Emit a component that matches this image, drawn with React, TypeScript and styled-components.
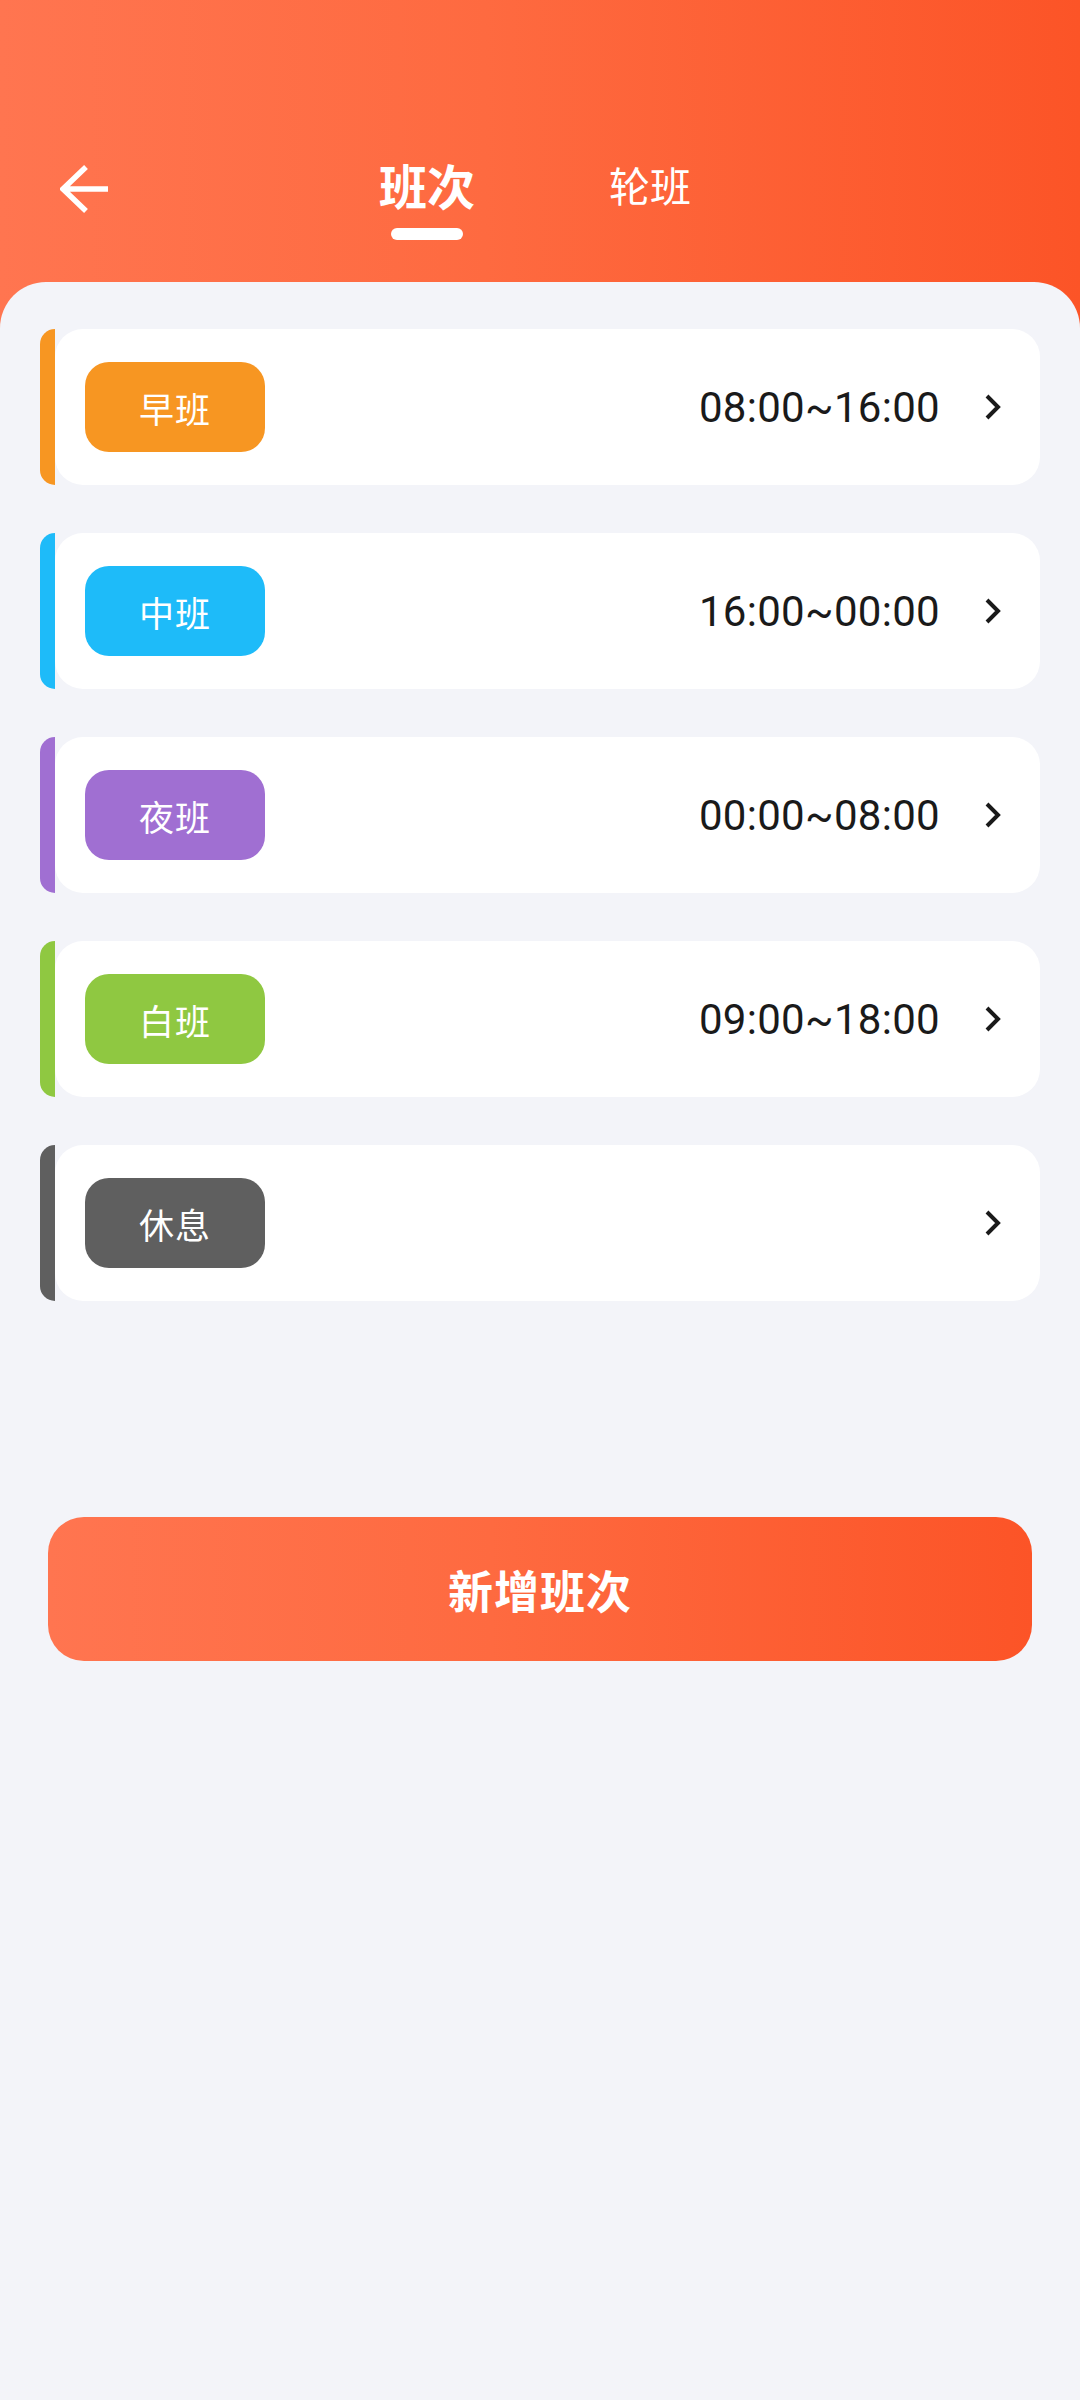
import React from "react";
import styled, { createGlobalStyle } from "styled-components";

const GlobalStyle = createGlobalStyle`
  html, body {
    margin: 0;
    padding: 0;
    background: #f3f4f9;
  }
  body {
    font-family: Roboto, "Noto Sans CJK SC", sans-serif;
    -webkit-font-smoothing: antialiased;
  }
  * {
    box-sizing: border-box;
  }
`;

interface Shift {
  name: string;
  time?: string;
  color: string;
}

const shifts: Shift[] = [
  { name: "早班", time: "08:00~16:00", color: "#f79622" },
  { name: "中班", time: "16:00~00:00", color: "#1ebbf9" },
  { name: "夜班", time: "00:00~08:00", color: "#a06fd2" },
  { name: "白班", time: "09:00~18:00", color: "#8fc841" },
  { name: "休息", color: "#5f5f5f" },
];

export default function App() {
  return (
    <Page>
      <GlobalStyle />
      <Header>
        <BackButton aria-label="back">
          <svg width="50" height="50" viewBox="0 0 50 50" fill="none">
            <path
              d="M26 3 L3 25 L26 47 M3 25 H48"
              stroke="#fff"
              strokeWidth="5.5"
              strokeLinecap="butt"
              strokeLinejoin="miter"
            />
          </svg>
        </BackButton>
        <Tabs>
          <Tab $active>
            <TabLabel $active>班次</TabLabel>
            <Indicator />
          </Tab>
          <Tab>
            <TabLabel>轮班</TabLabel>
          </Tab>
        </Tabs>
      </Header>
      <Panel>
        <ShiftList>
          {shifts.map((s) => (
            <ShiftCard key={s.name}>
              <Stripe $color={s.color} />
              <CardBody>
                <Badge $color={s.color}>{s.name}</Badge>
                <TimeText>{s.time}</TimeText>
                <Chevron width="18" height="26" viewBox="0 0 18 26" fill="none">
                  <path
                    d="M3 2 L14 13 L3 24"
                    stroke="#1a1a1a"
                    strokeWidth="4"
                    strokeLinejoin="miter"
                  />
                </Chevron>
              </CardBody>
            </ShiftCard>
          ))}
        </ShiftList>
        <AddButton>新增班次</AddButton>
      </Panel>
    </Page>
  );
}

const Page = styled.div`
  min-height: 2400px;
  background: linear-gradient(90deg, #ff7550 0%, #fe6a40 45%, #fc5427 100%) top
      left / 100% 400px no-repeat,
    #f3f4f9;
  display: flex;
  flex-direction: column;
`;

const Header = styled.header`
  height: 282px;
  display: flex;
  align-items: flex-start;
  padding: 151px 0 0 60px;
`;

const BackButton = styled.button`
  width: 50px;
  height: 66px;
  padding: 0;
  border: none;
  background: none;
  display: flex;
  align-items: center;
  margin-top: 5px;
`;

const Tabs = styled.nav`
  display: flex;
  gap: 134px;
  margin-left: 269px;
`;

const Tab = styled.div<{ $active?: boolean }>`
  display: flex;
  flex-direction: column;
  align-items: center;
`;

const TabLabel = styled.span<{ $active?: boolean }>`
  font-family: "Noto Sans CJK SC", sans-serif;
  color: #fff;
  line-height: 66px;
  font-size: ${(p) => (p.$active ? "48px" : "41px")};
  font-weight: ${(p) => (p.$active ? 700 : 400)};
`;

const Indicator = styled.div`
  width: 72px;
  height: 12px;
  border-radius: 6px;
  background: #fff;
  margin-top: 11px;
`;

const Panel = styled.main`
  flex: 1;
  background: #f3f4f9;
  border-radius: 46px 46px 0 0;
  padding: 47px 40px 0;
`;

const ShiftList = styled.div`
  display: flex;
  flex-direction: column;
  gap: 48px;
`;

const ShiftCard = styled.div`
  height: 156px;
  display: flex;
`;

const Stripe = styled.div<{ $color: string }>`
  width: 15px;
  flex-shrink: 0;
  background: ${(p) => p.$color};
  border-radius: 15px 0 0 15px;
`;

const CardBody = styled.div`
  flex: 1;
  background: #fff;
  border-radius: 28px;
  display: flex;
  align-items: center;
  padding: 0 38px 0 30px;
`;

const Badge = styled.div<{ $color: string }>`
  width: 180px;
  height: 90px;
  border-radius: 24px;
  background: ${(p) => p.$color};
  color: #fff;
  font-family: "Noto Sans CJK SC", sans-serif;
  font-size: 35px;
  letter-spacing: 1px;
  display: flex;
  align-items: center;
  justify-content: center;
`;

const TimeText = styled.span`
  margin-left: auto;
  font-family: Roboto, sans-serif;
  font-size: 42px;
  color: #1a1a1a;
  letter-spacing: 0.3px;
`;

const Chevron = styled.svg`
  margin-left: 44px;
  flex-shrink: 0;
`;

const AddButton = styled.button`
  display: block;
  width: 984px;
  height: 144px;
  margin: 216px auto 0;
  border: none;
  border-radius: 36px;
  background: linear-gradient(90deg, #ff7550 0%, #fe6a40 45%, #fc5427 100%);
  color: #fff;
  font-family: "Noto Sans CJK SC", sans-serif;
  font-size: 45px;
  font-weight: 700;
  letter-spacing: 1px;
`;
